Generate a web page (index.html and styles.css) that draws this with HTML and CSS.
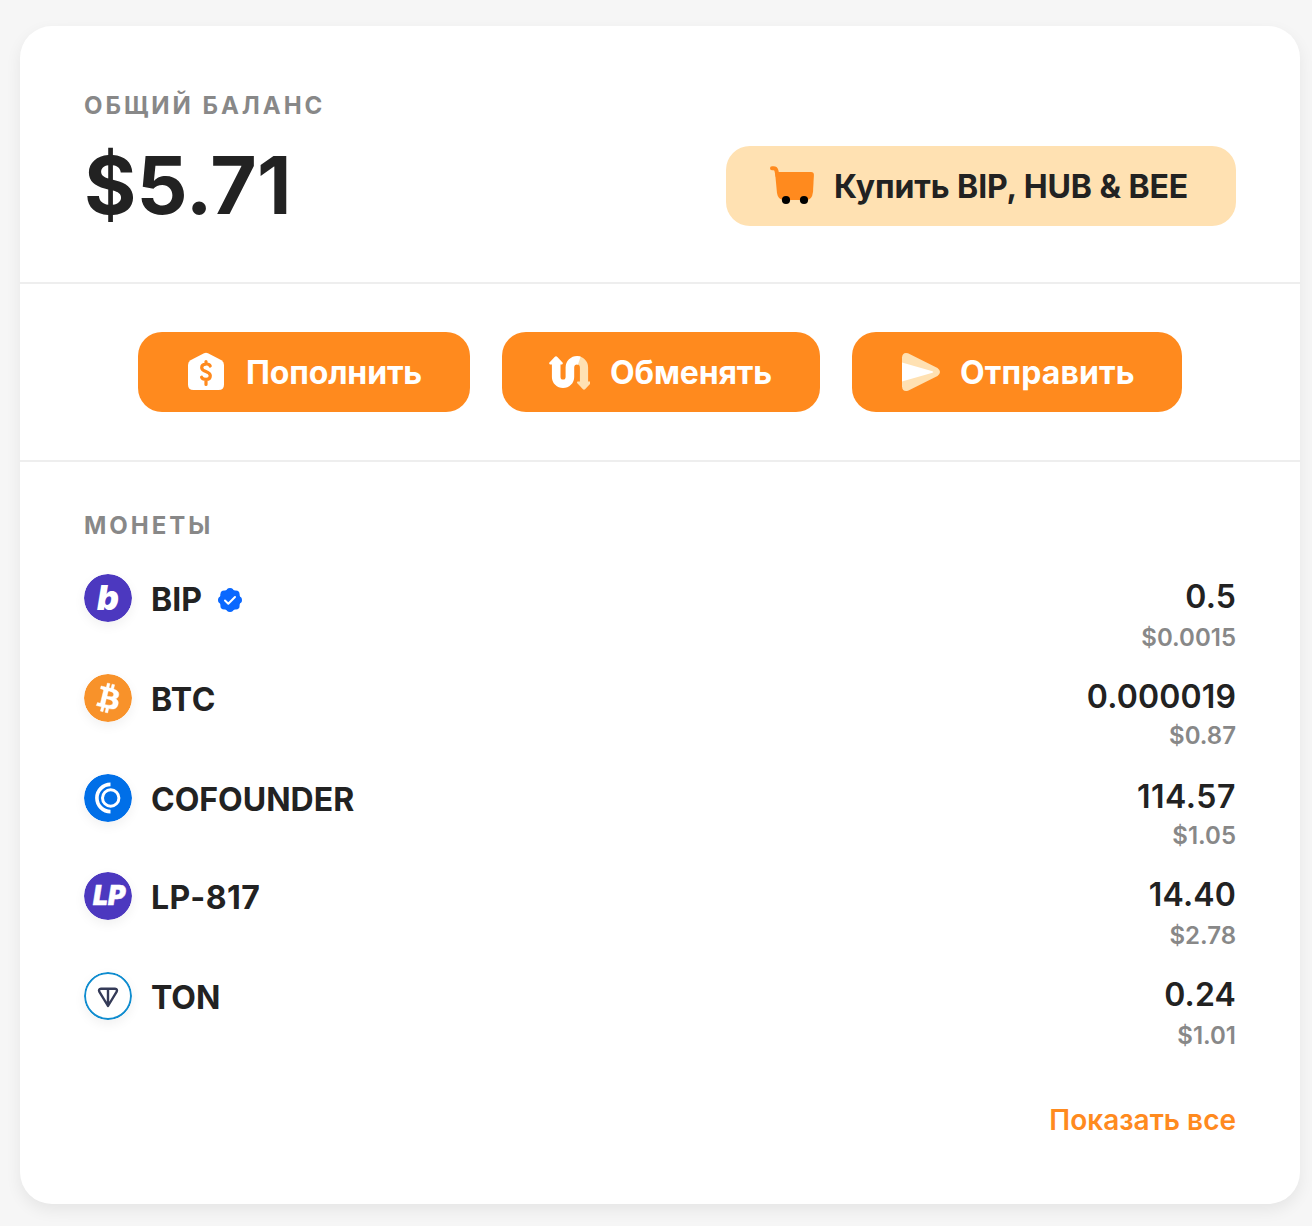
FILE: index.html
```html
<!DOCTYPE html>
<html lang="ru">
<head>
<meta charset="utf-8">
<title>Баланс</title>
<link rel="stylesheet" href="styles.css">
</head>
<body>
<main class="card">
  <section class="balance">
    <h2 class="label">ОБЩИЙ БАЛАНС</h2>
    <div class="balance-row">
      <div class="total">$5.71</div>
      <button class="btn btn-buy">
        <svg width="44" height="44" viewBox="0 0 44 44"><path d="M2 4.200h1.500q2.500 0 3 2.600l1 5" fill="none" stroke="#ff8a1e" stroke-width="4" stroke-linecap="round"/><path d="M5 8H41Q44 8 43.900 11L43 28Q42 36 36.500 36H14Q8 36 7 29Z" fill="#ff8a1e"/><circle cx="16" cy="36" r="4.100"/><circle cx="34" cy="36" r="4.100"/></svg>
        <span>Купить BIP, HUB &amp; BEE</span>
      </button>
    </div>
  </section>

  <section class="actions">
    <button class="btn btn-deposit">
      <svg width="44" height="44" viewBox="0 0 44 44"><path d="M24 2.700q1 0 2 .5L39.500 10.300Q42 11.800 42 15V34.500Q42 40 36.500 40H11.500Q6 40 6 34.500V15Q6 11.800 8.500 10.300L22 3.200Q23 2.700 24 2.700Z" fill="#fff"/><path d="M28.200 16C27.500 13.600 19.700 12.600 19.700 17.700C19.700 22.300 28.300 20.800 28.300 25.800C28.300 31 20.500 29.800 19.600 27.200M24 11.500V14M24 30V34.500" fill="none" stroke="#ff8a1e" stroke-width="3.200" stroke-linecap="round"/></svg>
      <span>Пополнить</span>
    </button>
    <button class="btn btn-swap">
      <svg width="44" height="44" viewBox="0 0 44 44"><g transform="translate(3 5.900)"><path d="M28 4.500A7 7 0 0 1 35 11.500V27" fill="none" stroke="#ffe1b2" stroke-width="8.200"/><path d="M28.800 25.500H41Q42.600 26 41.600 27.400L36.300 33.200Q35 34.600 33.700 33.200L28.400 27.400Q27.400 26 28.800 25.500Z" fill="#ffe1b2"/><path d="M7.200 6V21A6.800 6.800 0 0 0 20.900 21V11.500A7.200 7.200 0 0 1 28.100 4.300Q29.400 4.300 30.300 4.600" fill="none" stroke="#fff" stroke-width="8.600"/><path d="M1 8.500Q-.5 8 .5 6.500L5.600 1Q7 -.4 8.400 1L13.500 6.500Q14.500 8 13 8.500Z" fill="#fff"/></g></svg>
      <span>Обменять</span>
    </button>
    <button class="btn btn-send">
      <svg width="44" height="44" viewBox="0 0 44 44"><path d="M6 7.500Q6.500 1.800 12 3.300L41.500 18Q46.500 22 41.500 26L12 40.700Q6.500 42.200 6 36.500Z" fill="#ffe1b2"/><path d="M6 12.500L36.500 21.200Q38.200 22 36.500 22.800L6 31.500Z" fill="#fff"/></svg>
      <span>Отправить</span>
    </button>
  </section>

  <section class="coins">
    <h2 class="label">МОНЕТЫ</h2>
    <ul class="coin-list">
      <li class="coin">
        <svg class="coin-icon" viewBox="0 0 48 48"><circle cx="24" cy="24" r="24" fill="#4c38bf"/><text class="glyph-b" x="24" y="35.500">b</text></svg>
        <span class="name name-bip">BIP</span>
        <svg class="verified" width="24" height="24" viewBox="0 0 24 24"><g fill="#0a68ff"><circle cx="12" cy="12" r="10.600"/><circle cx="12" cy="3.800" r="3.800"/><circle cx="17.800" cy="6.200" r="3.800"/><circle cx="20.200" cy="12" r="3.800"/><circle cx="17.800" cy="17.800" r="3.800"/><circle cx="12" cy="20.200" r="3.800"/><circle cx="6.200" cy="17.800" r="3.800"/><circle cx="3.800" cy="12" r="3.800"/><circle cx="6.200" cy="6.200" r="3.800"/></g><path d="M7 12.500l3.300 3.200L17 9" fill="none" stroke="#fff" stroke-width="2" stroke-linecap="round" stroke-linejoin="round"/></svg>
        <div class="value"><div class="amount">0.5</div><div class="fiat">$0.0015</div></div>
      </li>
      <li class="coin coin-tight">
        <svg class="coin-icon" viewBox="0 0 32 32"><circle cx="16" cy="16" r="16" fill="#f8922a"/><path fill="#fff" stroke="#fff" stroke-width=".3" d="M23.189 14.02c.314-2.096-1.283-3.223-3.465-3.975l.708-2.84-1.728-.43-.69 2.765c-.454-.114-.92-.22-1.385-.326l.695-2.783L15.596 6l-.708 2.839c-.376-.086-.746-.17-1.104-.26l.002-.009-2.384-.595-.46 1.846s1.283.294 1.256.312c.7.175.826.638.805 1.006l-.806 3.235c.048.012.11.03.18.057l-.183-.045-1.13 4.532c-.086.212-.303.531-.793.41.018.025-1.256-.313-1.256-.313l-.858 1.978 2.25.561c.418.105.828.215 1.231.318l-.715 2.872 1.727.43.708-2.84c.472.127.93.245 1.378.357l-.706 2.828 1.728.43.715-2.866c2.948.558 5.164.333 6.097-2.333.752-2.146-.037-3.385-1.588-4.192 1.13-.26 1.98-1.003 2.207-2.538zm-3.95 5.538c-.533 2.147-4.148.986-5.32.695l.95-3.805c1.172.293 4.929.872 4.37 3.11zm.535-5.569c-.487 1.953-3.495.96-4.47.717l.86-3.45c.975.243 4.118.696 3.61 2.733z"/></svg>
        <span class="name name-wide">BTC</span>
        <div class="value"><div class="amount">0.000019</div><div class="fiat">$0.87</div></div>
      </li>
      <li class="coin coin-tight coin-short">
        <svg class="coin-icon" viewBox="0 0 48 48"><circle cx="24" cy="24" r="24" fill="#006fe8"/><g fill="none" stroke="#fff"><circle cx="26.700" cy="24" r="8.200" stroke-width="3"/><path d="M26.500 10.400A13.600 13.600 0 0 0 26.500 37.600" stroke-width="3.600"/></g></svg>
        <span class="name">COFOUNDER</span>
        <div class="value"><div class="amount amount-wide">114.57</div><div class="fiat">$1.05</div></div>
      </li>
      <li class="coin">
        <svg class="coin-icon" viewBox="0 0 48 48"><circle cx="24" cy="24" r="24" fill="#4c38bf"/><text class="glyph-lp" x="25.200" y="33">LP</text></svg>
        <span class="name name-wide">LP-817</span>
        <div class="value"><div class="amount">14.40</div><div class="fiat">$2.78</div></div>
      </li>
      <li class="coin">
        <svg class="coin-icon" viewBox="0 0 48 48"><circle cx="24" cy="24" r="23" fill="#fff" stroke="#0f8ccf" stroke-width="2"/><path d="M17 16.800H31Q33.800 17 32.700 19.600L24 34L15.300 19.600Q14.200 17 17 16.800ZM24 17V33.500" fill="none" stroke="#353b58" stroke-width="2.400" stroke-linejoin="round"/></svg>
        <span class="name">TON</span>
        <div class="value"><div class="amount">0.24</div><div class="fiat">$1.01</div></div>
      </li>
    </ul>
    <a class="show-all">Показать все</a>
  </section>
</main>
</body>
</html>
```
FILE: styles.css
```css
* { box-sizing: border-box; }

body {
  margin: 0;
  padding: 26px 12px 22px 20px;
  height: 1226px;
  overflow: hidden;
  background: #f6f6f6;
  color: #222;
  font-family: Inter, "Liberation Sans", sans-serif;
}

.card {
  display: flex;
  flex-direction: column;
  height: 1178px;
  background: #fff;
  border-radius: 32px;
  box-shadow: 0 6px 16px rgba(0, 0, 0, .07);
}

.label {
  margin: 0;
  font-size: 24px;
  line-height: 28px;
  font-weight: 700;
  letter-spacing: 2.96px;
  color: #888;
}

.balance {
  height: 258px;
  padding: 66px 64px 0;
  border-bottom: 2px solid #eee;
}

.balance-row {
  display: flex;
  align-items: center;
  justify-content: space-between;
  margin-top: 26px;
}

.total {
  font-size: 80px;
  line-height: 77px;
  font-weight: 700;
  padding-bottom: 3px;
}

.btn {
  display: flex;
  align-items: center;
  gap: 20px;
  height: 80px;
  padding: 0 0 0 44px;
  border: 0;
  border-radius: 24px;
  background: #ff8a1e;
  color: #fff;
  font: 700 32px/40px Inter, "Liberation Sans", sans-serif;
  letter-spacing: -.15px;
  white-space: nowrap;
}

.btn svg { flex: none; }
.btn span { padding-top: 2px; }
.btn-buy { width: 510px; background: #ffe1b2; color: #222; letter-spacing: -.07px; }
.btn-deposit { width: 332px; }
.btn-swap { width: 318px; }
.btn-send { width: 330px; letter-spacing: .1px; }

.actions {
  display: flex;
  align-items: center;
  justify-content: center;
  gap: 32px;
  height: 178px;
  border-bottom: 2px solid #eee;
}

.coins {
  display: flex;
  flex-direction: column;
  padding: 50px 64px 0;
}

.coin-list {
  margin: 34px 0 0;
  padding: 0;
  list-style: none;
}

.coin {
  display: flex;
  align-items: flex-start;
  height: 100px;
}

.coin-short { height: 98px; }

.coin-icon {
  flex: none;
  width: 48px;
  height: 48px;
  margin-right: 19px;
  border-radius: 50%;
  box-shadow: 0 4px 12px rgba(0, 0, 0, .06);
}

.glyph-b {
  fill: #fff;
  font: italic 900 34px Inter, sans-serif;
  text-anchor: middle;
}

.glyph-lp {
  fill: #fff;
  stroke: #fff;
  stroke-width: .5px;
  font: italic 900 26.500px Inter, sans-serif;
  text-anchor: middle;
}

.name {
  padding-top: 6px;
  font-size: 32px;
  line-height: 40px;
  font-weight: 700;
  letter-spacing: 0;
}

.name-bip { width: 51px; }
.name-wide { letter-spacing: .5px; }

.verified { margin: 14px 0 0 16px; }

.value {
  margin-left: auto;
  text-align: right;
}

.amount {
  padding-top: 3px;
  font-size: 32px;
  line-height: 40px;
  font-weight: 600;
  letter-spacing: .15px;
}

.amount-wide { letter-spacing: .55px; }

.fiat {
  margin-top: 7px;
  font-size: 24px;
  line-height: 28px;
  font-weight: 600;
  color: #888;
}

.coin-tight .fiat { margin-top: 5px; }

.show-all {
  align-self: flex-end;
  margin-top: 30px;
  font-size: 28px;
  line-height: 36px;
  font-weight: 600;
  color: #ff8a1e;
}
```
